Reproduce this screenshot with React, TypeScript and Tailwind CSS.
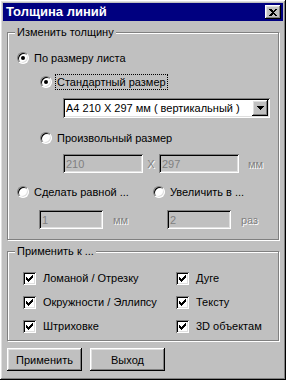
import React from "react";

const raised =
  "shadow-[inset_-1px_-1px_#000,inset_1px_1px_#fff,inset_-2px_-2px_#808080,inset_2px_2px_#dfdfdf]";
const sunken =
  "shadow-[inset_1px_1px_#808080,inset_-1px_-1px_#fff,inset_2px_2px_#000,inset_-2px_-2px_#dfdfdf]";
const etched = "border border-[#808080] shadow-[inset_1px_1px_#fff,1px_1px_#fff]";
const grayText = "text-[#808080] [text-shadow:1px_1px_#fff]";

const Radio = ({ checked }: { checked?: boolean }) => (
  <span className="w-3 h-3 shrink-0 rounded-full bg-white border border-t-[#808080] border-l-[#808080] border-b-white border-r-white shadow-[inset_1px_1px_#000,inset_-1px_-1px_#dfdfdf] flex items-center justify-center">
    {checked && <span className="w-1 h-1 bg-black rounded-full" />}
  </span>
);

const Check = () => (
  <span className={`w-[13px] h-[13px] shrink-0 bg-white flex items-center justify-center ${sunken}`}>
    <svg width="7" height="7" viewBox="0 0 7 7" shapeRendering="crispEdges">
      <rect x="0" y="2" width="1" height="3" />
      <rect x="1" y="3" width="1" height="3" />
      <rect x="2" y="4" width="1" height="3" />
      <rect x="3" y="3" width="1" height="3" />
      <rect x="4" y="2" width="1" height="3" />
      <rect x="5" y="1" width="1" height="3" />
      <rect x="6" y="0" width="1" height="3" />
    </svg>
  </span>
);

const Field = ({ value, w }: { value: string; w: string }) => (
  <div className={`${w} h-[19px] bg-[#c0c0c0] text-[#808080] pl-[3px] flex items-center ${sunken}`}>{value}</div>
);

const CheckRow = ({ label }: { label: string }) => (
  <div className="h-4 flex items-center gap-[7px]">
    <Check />
    <span>{label}</span>
  </div>
);

export default function App() {
  return (
    <div
      className={`w-[286px] h-[380px] bg-[#c0c0c0] p-[3px] flex flex-col text-[11px] text-black font-['Liberation_Sans',Arial,sans-serif] leading-4 ${raised}`}
    >
      {/* title bar */}
      <div className="h-[18px] bg-[#000080] flex items-center justify-between pl-[3px] pr-[2px]">
        <span className="text-white font-bold text-[13px]">Толщина линий</span>
        <button className={`w-4 h-[14px] bg-[#c0c0c0] flex items-center justify-center ${raised}`}>
          <svg width="8" height="7" viewBox="0 0 8 7" shapeRendering="crispEdges">
            <path d="M0 0h2l2 2 2-2h2L5 3.5 8 7H6L4 5 2 7H0l3-3.5z" />
          </svg>
        </button>
      </div>

      <div className="flex flex-col px-1 mt-[11px]">
        {/* group 1 */}
        <div className={`relative h-[208px] ${etched} flex flex-col`}>
          <span className="absolute left-[7px] -top-[9px] px-[2px] bg-[#c0c0c0]">Изменить толщину</span>

          <div className="mt-[17px] ml-[9px] h-4 flex items-center gap-[5px]">
            <Radio checked />
            <span>По размеру листа</span>
          </div>

          <div className="mt-2 ml-[32px] h-4 flex items-center gap-[3px]">
            <Radio checked />
            <span className="border border-dotted border-black px-[1px] leading-[14px]">Стандартный размер</span>
          </div>

          <div className={`mt-2 ml-[55px] w-[207px] h-5 bg-white flex items-center justify-between pl-[3px] pr-[2px] ${sunken}`}>
            <span>А4 210 X 297 мм ( вертикальный )</span>
            <span className={`w-4 h-4 bg-[#c0c0c0] flex items-center justify-center ${raised}`}>
              <svg width="7" height="4" viewBox="0 0 7 4" shapeRendering="crispEdges">
                <path d="M0 0h7L3.5 4z" />
              </svg>
            </span>
          </div>

          <div className="mt-3 ml-[32px] h-4 flex items-center gap-[5px]">
            <Radio />
            <span>Произвольный размер</span>
          </div>

          <div className="mt-2 ml-[55px] flex items-center">
            <Field value="210" w="w-[80px]" />
            <span className={`w-[16px] text-center ${grayText}`}>X</span>
            <Field value="297" w="w-[80px]" />
            <span className={`ml-[9px] ${grayText}`}>мм</span>
          </div>

          <div className="mt-[11px] ml-[9px] h-4 flex items-center">
            <div className="w-[136px] flex items-center gap-[5px]">
              <Radio />
              <span>Сделать равной ...</span>
            </div>
            <div className="flex items-center gap-[5px]">
              <Radio />
              <span>Увеличить в ...</span>
            </div>
          </div>

          <div className="mt-[10px] ml-[31px] flex items-center">
            <Field value="1" w="w-[64px]" />
            <span className={`ml-[10px] w-[54px] ${grayText}`}>мм</span>
            <Field value="2" w="w-[64px]" />
            <span className={`ml-[10px] ${grayText}`}>раз</span>
          </div>
        </div>

        {/* group 2 */}
        <div className={`relative mt-[11px] h-[90px] ${etched} flex`}>
          <span className="absolute left-[7px] -top-[9px] px-[2px] bg-[#c0c0c0]">Применить к ...</span>
          <div className="ml-[15px] mt-[18px] w-[153px] flex flex-col gap-2">
            <CheckRow label="Ломаной / Отрезку" />
            <CheckRow label="Окружности / Эллипсу" />
            <CheckRow label="Штриховке" />
          </div>
          <div className="mt-[18px] flex flex-col gap-2">
            <CheckRow label="Дуге" />
            <CheckRow label="Тексту" />
            <CheckRow label="3D объектам" />
          </div>
        </div>

        {/* buttons */}
        <div className="mt-[7px] flex gap-2">
          <button className={`w-[75px] h-[23px] bg-[#c0c0c0] ${raised}`}>Применить</button>
          <button className={`w-[75px] h-[23px] bg-[#c0c0c0] ${raised}`}>Выход</button>
        </div>
      </div>
    </div>
  );
}
